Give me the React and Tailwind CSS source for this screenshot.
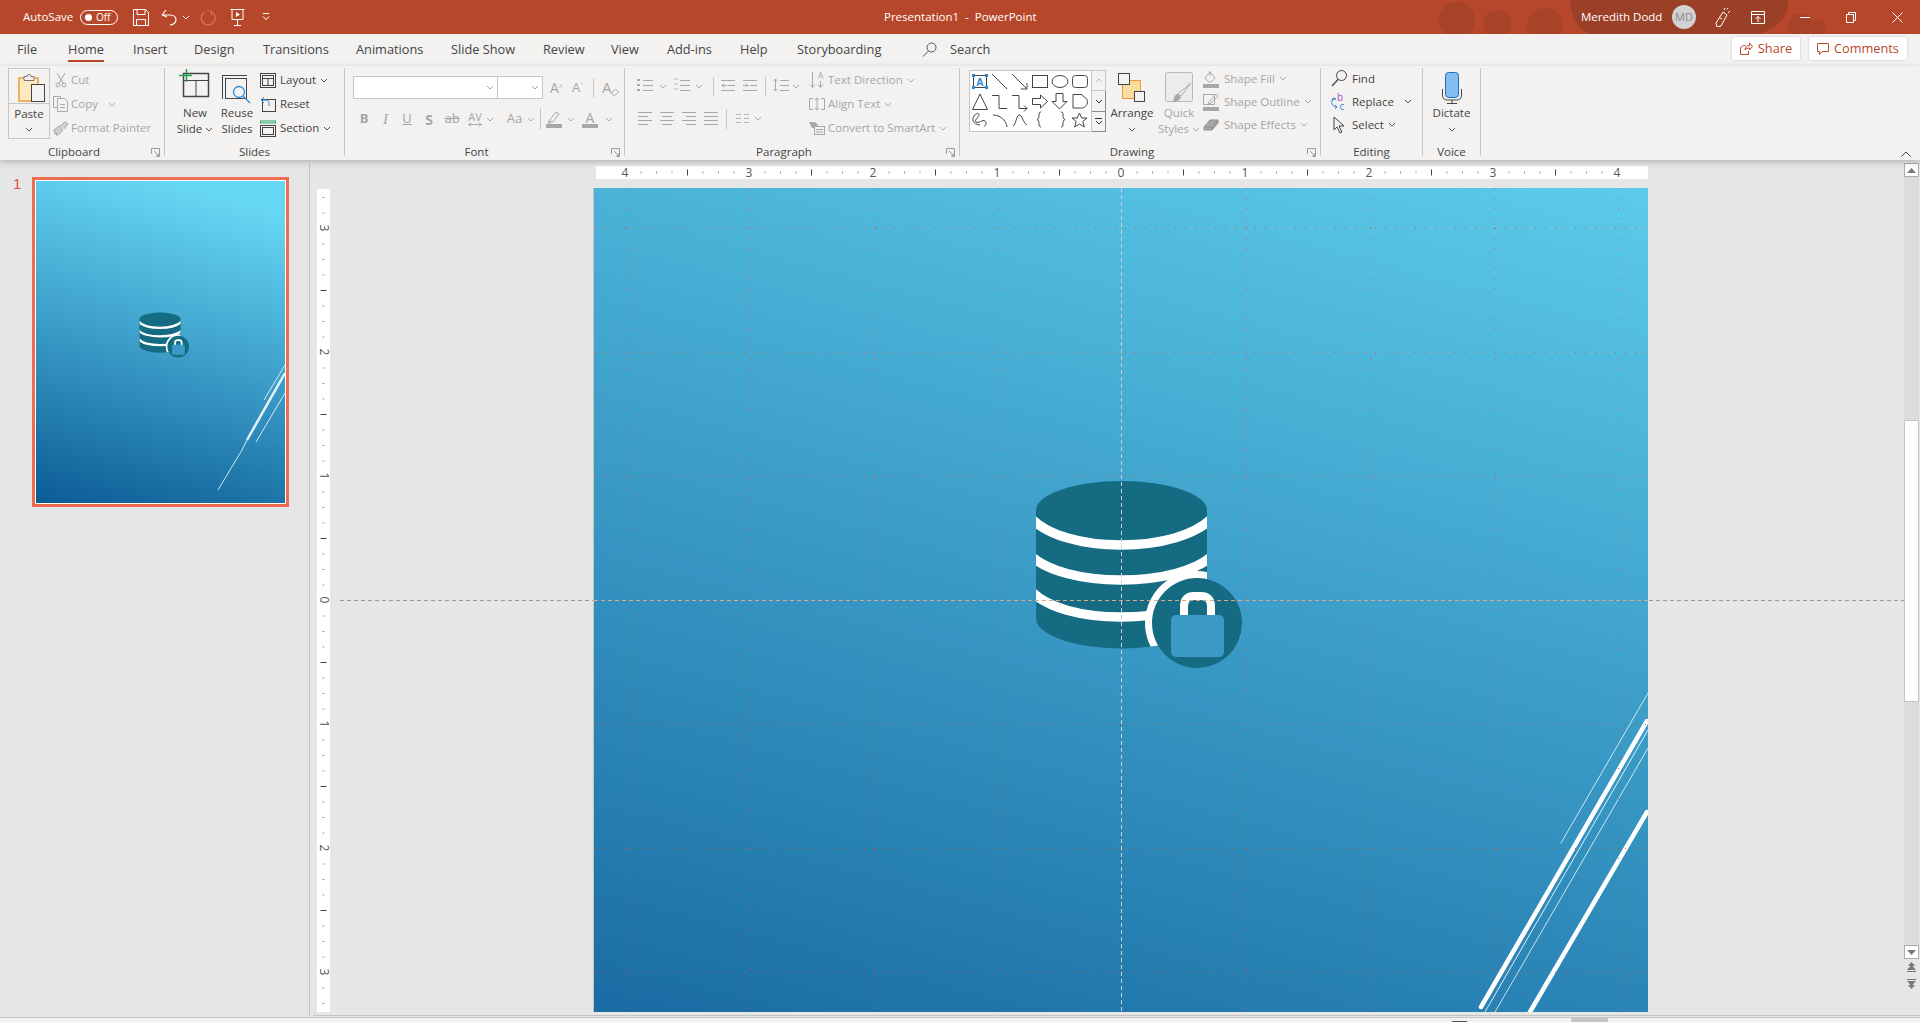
import React from 'react';

const GRAY = '#a8a8a8';
const DARK = '#444444';

const tabs = [
    { label: 'File', w: 'w-[51px]' },
    { label: 'Home', w: 'w-[65px]', active: true },
    { label: 'Insert', w: 'w-[61px]' },
    { label: 'Design', w: 'w-[69px]' },
    { label: 'Transitions', w: 'w-[93px]' },
    { label: 'Animations', w: 'w-[95px]' },
    { label: 'Slide Show', w: 'w-[92px]' },
    { label: 'Review', w: 'w-[68px]' },
    { label: 'View', w: 'w-[56px]' },
    { label: 'Add-ins', w: 'w-[73px]' },
    { label: 'Help', w: 'w-[57px]' },
    { label: 'Storyboarding', w: 'w-[125px]' },
];

const Chev = ({ color = '#555555', className = '' }) => (
    <svg width="8" height="5" viewBox="0 0 8 5" className={className}>
        <path d="M1 1l3 3 3-3" fill="none" stroke={color} strokeWidth="1" />
    </svg>
);

const Row = ({ icon, label, chev, disabled, h = 'h-[24px]', iconW = 'w-[18px]', gap = '' }) => (
    <div className={`flex items-center whitespace-nowrap ${h} ${disabled ? 'text-[#a6a6a6]' : 'text-[#444444]'}`}>
        <div className={`flex items-center shrink-0 ${iconW}`}>{icon}</div>
        <span>{label}</span>
        {chev && <Chev color={disabled ? GRAY : '#555555'} className={gap || 'ml-[4px]'} />}
    </div>
);

const Launcher = () => (
    <svg width="9" height="9" viewBox="0 0 9 9" className="absolute right-[4px] top-[4px]">
        <path d="M.5 6V.5H8.5V8.5H6M3 3l5 5M5 8h3V5" fill="none" stroke="#9a9a9a" strokeWidth="1" />
    </svg>
);

const Group = ({ label, launcher, w, children }) => (
    <div className={`flex flex-col h-[88px] border-r border-[#c8c6c4] shrink-0 ${w}`}>
        <div className="h-[76px] flex">{children}</div>
        <div className={`relative h-[12px] text-center text-[#444444] leading-[16px] ${launcher ? 'pr-[16px]' : ''}`}>
            {label}
            {launcher && <Launcher />}
        </div>
    </div>
);

const BigButton = ({ icon, lines, chev, disabled, w = 'w-[44px]' }) => (
    <div className={`flex flex-col items-center shrink-0 ${w} ${disabled ? 'text-[#a6a6a6]' : 'text-[#444444]'}`}>
        <div className="h-[37px] w-full flex justify-center">{icon}</div>
        {lines.map((l, i) => (
            <div key={l} className="h-[16px] leading-[16px] flex items-center whitespace-nowrap">
                {l}
                {chev && i === lines.length - 1 && <Chev color={disabled ? GRAY : '#555555'} className="ml-[3px]" />}
            </div>
        ))}
        {lines.length === 1 && <div className="h-[16px] flex items-center"><Chev /></div>}
    </div>
);

// bullets, numbering, indents and such for the paragraph group
const textLines = (x, y, w, n, gap, stroke = GRAY) =>
    Array.from({ length: n }).map((_, i) => (
        <path key={`${x}-${y}-${i}`} d={`M${x} ${y + i * gap + 0.5}h${w}`} stroke={stroke} />
    ));

const ParagraphTop = () => (
    <svg width="184" height="22" viewBox="624 75 184 22">
        <g fill="none">
            {textLines(642, 80, 10, 3, 5)}
            <rect x="636" y="79" width="3" height="2" fill={GRAY} />
            <rect x="636" y="84" width="3" height="2" fill={GRAY} />
            <rect x="636" y="89" width="3" height="2" fill={GRAY} />
            <path d="M659 85l3 3 3-3M695 85l3 3 3-3M792 85l3 3 3-3" stroke={GRAY} />
            {textLines(679, 80, 10, 3, 5)}
            <path d="M673 79h4M673 84h4M673 89h4" stroke={GRAY} strokeDasharray="2 1" />
            <path d="M712.5 77v19M764.5 77v19" stroke="#c8c6c4" />
            {textLines(720, 80, 14, 1, 5)}
            {textLines(720, 90, 14, 1, 5)}
            {textLines(727, 85, 7, 1, 5)}
            <path d="M726 85.5h-5m2-2l-2 2 2 2" stroke={GRAY} />
            {textLines(742, 80, 14, 1, 5)}
            {textLines(742, 90, 14, 1, 5)}
            {textLines(749, 85, 7, 1, 5)}
            <path d="M742 85.5h5m-2-2l2 2-2 2" stroke={GRAY} />
            <path d="M774.5 79v12m-2-10l2-2 2 2m-4 8l2 2 2-2" stroke={GRAY} />
            {textLines(779, 80, 9, 3, 5)}
        </g>
    </svg>
);

const ParagraphBottom = () => (
    <svg width="184" height="22" viewBox="624 108 184 22">
        <g fill="none">
            {textLines(637, 112, 14, 1, 0)}{textLines(637, 116, 10, 1, 0)}{textLines(637, 120, 14, 1, 0)}{textLines(637, 124, 10, 1, 0)}
            {textLines(659, 112, 14, 1, 0)}{textLines(661, 116, 10, 1, 0)}{textLines(659, 120, 14, 1, 0)}{textLines(661, 124, 10, 1, 0)}
            {textLines(681, 112, 14, 1, 0)}{textLines(685, 116, 10, 1, 0)}{textLines(681, 120, 14, 1, 0)}{textLines(685, 124, 10, 1, 0)}
            {textLines(703, 112, 14, 4, 4)}
            <path d="M725.5 109v20" stroke="#c8c6c4" />
            <g opacity=".8">
                {textLines(735, 114, 5, 3, 4)}
                {textLines(743, 114, 5, 3, 4)}
            </g>
            <path d="M754 117l3 3 3-3" stroke={GRAY} />
        </g>
    </svg>
);

// the shape gallery of the Drawing group
const ShapeGallery = () => (
    <svg width="121" height="60" viewBox="1 1 121 60" fill="none" stroke={DARK} strokeWidth="1">
        <rect x="4.5" y="5.5" width="13" height="12" />
        <g fill="#2b88d8" stroke="none">
            <rect x="3" y="4" width="3" height="3" /><rect x="16" y="4" width="3" height="3" />
            <rect x="3" y="16" width="3" height="3" /><rect x="16" y="16" width="3" height="3" />
        </g>
        <text x="11" y="15.5" textAnchor="middle" fontSize="10" fontWeight="700" fill="#2b88d8" stroke="none" fontFamily="Open Sans, sans-serif">A</text>
        <path d="M23 4l15 15" />
        <path d="M43 4l15 15m-6 0h6v-6" />
        <rect x="63.5" y="5.5" width="15" height="12" />
        <ellipse cx="91" cy="11.5" rx="8" ry="6" />
        <rect x="103.5" y="5.5" width="15" height="12" rx="3" />
        <path d="M11 24L3.5 39.5h15z" />
        <path d="M23 25.5h7v13h8" />
        <path d="M43 25.5h7v13h8m-3-3l3 3-3 3" />
        <path d="M63.5 28.5h8v-3.5l7 6.5-7 6.5v-3.5h-8z" />
        <path d="M87 23.5h7v8h4l-7.5 7.500-7.500-7.500h4z" />
        <path d="M104 24.500h9c1 3 5.500 3 5.500 7 0 4-3 6.500-6 6.500h-8.500z" />
        <path d="M11 55c-8-1-8-6-6-9 2-3 5-3 5-1s-5 5-3 7 7-3 9-1 1 5-1 5" />
        <path d="M24 45c7 0 13 5 14 12" />
        <path d="M44 56c3-1 3-10 6-11s4 8 8 10" />
        <path d="M72 43c-2 0-2 1-2 3s0 4-2 4.500c2 .5 2 3 2 4.500s0 3 2 3M92 43c2 0 2 1 2 3s0 4 2 4.500c-2 .5-2 3-2 4.500s0 3-2 3" transform="translate(0 -1)" />
        <path d="M110.500 43l2.200 5h5.300l-4.200 3.500 1.600 5.500-4.900-3-4.900 3 1.600-5.500-4.200-3.500h5.300z" />
    </svg>
);

const GalleryScroll = () => (
    <div className="flex flex-col w-[14px] h-[62px] shrink-0">
        <div className="h-[21px] border border-l-0 border-[#c8c6c4] flex items-center justify-center"><svg width="8" height="5"><path d="M1 4l3-3 3 3" fill="none" stroke="#bbbbbb" /></svg></div>
        <div className="h-[21px] border border-l-0 border-t-0 border-[#8a8a8a] flex items-center justify-center"><Chev color="#333333" /></div>
        <div className="h-[20px] border border-l-0 border-t-0 border-[#8a8a8a] flex flex-col items-center justify-center gap-[1px]">
            <div className="w-[7px] h-[1px] bg-[#333333]" />
            <Chev color="#333333" />
        </div>
    </div>
);

const DbLock = ({ size, id }) => (
    <svg width={size} height={size} viewBox="1030 475 220 220">
        <defs>
            <clipPath id={id}>
                <path d="M1036 510.500a85.500 29.500 0 0 1 171 0v108c0 16-38 30-85.500 30s-85.500-14-85.500-30z" />
            </clipPath>
        </defs>
        <path d="M1036 510.500a85.500 29.500 0 0 1 171 0v108c0 16-38 30-85.500 30s-85.500-14-85.500-30z" fill="#156b82" />
        <g clipPath={`url(#${id})`}>
            <g fill="none" stroke="#ffffff" strokeWidth="9.500">
                <path d="M1030 517c16 18 52 28 91 28s76-10 92-28" />
                <path d="M1030 555c16 16 52 25 91 25s76-9 92-25" />
                <path d="M1030 590c16 18 52 27 91 27s76-9 92-27" />
            </g>
            <circle cx="1197" cy="623" r="52" fill="#ffffff" />
        </g>
        <circle cx="1197" cy="623" r="45" fill="#156b82" />
        <path d="M1184 616v-10c0-7 4-10 10-10h7c6 0 10 3 10 10v10" fill="none" stroke="#ffffff" strokeWidth="8" />
        <rect x="1171" y="615" width="53" height="42" rx="5" fill="#3b9ac5" />
    </svg>
);

const rulerSteps = Array.from({ length: 65 }).map((_, i) => i - 32);

const HRuler = () => (
    <svg width="1052" height="13" viewBox="596 0 1052 13" className="block bg-white overflow-visible">
        {rulerSteps.map((k) => {
            const x = 1121 + k * 15.5;
            if (k % 8 === 0) {
                return <text key={k} x={x} y="11" textAnchor="middle" fontSize="12" fill="#555555" fontFamily="Open Sans, sans-serif">{Math.abs(k) / 8}</text>;
            }
            if (k % 4 === 0) return <rect key={k} x={x} y="3.500" width="1" height="6" fill="#444444" />;
            return <rect key={k} x={x} y="5.500" width="1" height="2" fill="#999999" />;
        })}
    </svg>
);

const VRuler = () => (
    <svg width="13" height="823" viewBox="0 189 13 823" className="block bg-white overflow-visible">
        {rulerSteps.filter((k) => Math.abs(k) <= 26).map((k) => {
            const y = 600 + k * 15.5;
            if (k % 8 === 0) {
                return <text key={k} x="0" y="0" transform={`translate(2.500 ${y}) rotate(90)`} textAnchor="middle" fontSize="12" fill="#555555" fontFamily="Open Sans, sans-serif">{Math.abs(k) / 8}</text>;
            }
            if (k % 4 === 0) return <rect key={k} x="3.500" y={y} width="6" height="1" fill="#444444" />;
            return <rect key={k} x="5.500" y={y} width="2" height="1" fill="#999999" />;
        })}
    </svg>
);

const gridX = [626, 750, 874, 998, 1246, 1370, 1494, 1618];
const gridY = [228, 352, 476, 724, 848, 972];

const Guides = () => (
    <svg width="1920" height="858" viewBox="0 160 1920 858" className="absolute left-0 top-0 pointer-events-none">
        <g stroke="#d9582c" strokeWidth="1" strokeDasharray="1 9" shapeRendering="crispEdges">
            {gridY.map((y) => <path key={y} d={`M595 ${y + 0.5}H1648`} />)}
            {gridX.map((x) => <path key={x} d={`M${x + 0.5} 188V1012`} />)}
        </g>
        <g strokeDasharray="4 3" strokeWidth="1">
            <path d="M340 600.500H593M1649 600.500H1904" stroke="#9a9a9a" />
            <path d="M594 600.500H1648" stroke="#d8a98c" />
            <path d="M1121.500 188V1012" stroke="#c6d0d6" />
        </g>
    </svg>
);

const App = () => {
    return (
        <div className="w-[1920px] h-[1022px] overflow-hidden flex flex-col bg-[#e6e6e6] text-[12.75px] font-['Open_Sans',sans-serif] text-[#444444]">
            {/* title bar */}
            <div className="relative h-[34px] bg-[#b7472a] flex items-center text-white shrink-0 overflow-hidden">
                <svg width="420" height="34" viewBox="1420 0 420 34" className="absolute left-[1420px] top-0" fill="#9c3f27">
                    <g opacity=".55">
                        <circle cx="1457" cy="20" r="18" />
                        <circle cx="1497" cy="24" r="14" />
                        <circle cx="1545" cy="26" r="18" />
                        <circle cx="1800" cy="26" r="12" />
                        <circle cx="1818" cy="28" r="8" />
                    </g>
                    <path d="M1570 0H1788c2 14-8 26-28 34H1590c-14-6-20-20-20-34z" />
                </svg>
                <div className="relative w-[884px] flex items-center pl-[23px]">
                    <span className="w-[57px] text-[11.500px]">AutoSave</span>
                    <div className="w-[38px] h-[15px] rounded-full border border-white flex items-center pl-[4px] gap-[4px] text-[10px] leading-none">
                        <div className="w-[7px] h-[7px] rounded-full bg-white" />
                        <span>Off</span>
                    </div>
                    <svg width="16" height="17" viewBox="0 0 16 17" fill="none" stroke="#fff" className="ml-[15px]">
                        <path d="M.5.500h12l3 3v13H.500zM4 .5v5h8v-5M3.500 16.500v-6h9v6" />
                    </svg>
                    <svg width="16" height="17" viewBox="0 0 16 17" fill="none" stroke="#fff" strokeWidth="1.200" className="ml-[12px]">
                        <path d="M1 6h8c4 0 6 2.500 6 5s-3 5-6 5M1 6l4-5M1 6l5 2" />
                    </svg>
                    <Chev color="#ffffff" className="ml-[5px]" />
                    <svg width="16" height="17" viewBox="0 0 16 17" fill="none" stroke="#d9735a" strokeWidth="1.200" className="ml-[10px]">
                        <path d="M11 2.500A7 7 0 1 1 4.500 3M11 2l.5 4.500M11 2L7 1" />
                    </svg>
                    <svg width="15" height="17" viewBox="0 0 15 17" fill="none" stroke="#fff" className="ml-[14px]">
                        <path d="M.5.500h14M2 .5v10h11V.5M7.500 10.500v6M4 16.500h7" />
                        <path d="M6 3l4 2.500L6 8z" fill="#fff" stroke="none" />
                    </svg>
                    <svg width="8" height="8" viewBox="0 0 8 8" fill="none" stroke="#fff" className="ml-[17px]">
                        <path d="M1 .5h6M1 3.500l3 3 3-3" />
                    </svg>
                </div>
                <div className="relative w-[697px] text-[11.500px] whitespace-pre">Presentation1  -  PowerPoint</div>
                <div className="relative flex items-center">
                    <span className="w-[91px] text-[11.500px]">Meredith Dodd</span>
                    <div className="w-[24px] h-[24px] rounded-full bg-[#d2d2d2] text-[#8a8a8a] text-[11px] flex items-center justify-center">MD</div>
                    <svg width="18" height="20" viewBox="0 0 18 20" fill="none" stroke="#fff" className="ml-[18px]">
                        <path d="M2 16l7-11 4 3-6 11-4 1zM10 3l1-2M14 6l2-2M13 2.500l1-1.500M8 12l-2-1" />
                    </svg>
                    <svg width="14" height="13" viewBox="0 0 14 13" fill="none" stroke="#fff" className="ml-[19px]">
                        <path d="M.5.500h13v12H.500zM.5 3.500h13M7 11V5.500M4.500 8L7 5.500 9.500 8" />
                    </svg>
                    <div className="w-[10px] h-[1px] bg-white ml-[35px]" />
                    <svg width="10" height="11" viewBox="0 0 10 11" fill="none" stroke="#fff" className="ml-[36px]">
                        <path d="M.5 2.500h7v8h-7zM2.500 2.500v-2h7v8h-2" />
                    </svg>
                    <svg width="11" height="11" viewBox="0 0 11 11" stroke="#fff" className="ml-[36px]">
                        <path d="M.5.500l10 10M10.500.500l-10 10" />
                    </svg>
                </div>
            </div>

            {/* tabs */}
            <div className="h-[32px] bg-[#f3f2f1] flex pl-[17px] shrink-0 text-[#444444]">
                {tabs.map((t) => (
                    <div key={t.label} className={`${t.w} shrink-0 h-full pt-[6px] leading-[18px]`}>
                        <span className={`inline-block h-[22px] ${t.active ? 'border-b-[2px] border-[#b7472a] font-medium' : ''}`}>{t.label}</span>
                    </div>
                ))}
                <div className="flex items-start pt-[8px]">
                    <svg width="15" height="15" viewBox="0 0 15 15" fill="none" stroke="#555555">
                        <circle cx="9.500" cy="5.500" r="4.500" />
                        <path d="M6.500 9L1 14.500" />
                    </svg>
                    <span className="ml-[13px] -mt-[2px] leading-[18px]">Search</span>
                </div>
                <div className="ml-auto pr-[13px] pt-[3px] flex gap-[9px] text-[#b7472a]">
                    <div className="w-[68px] h-[23px] bg-white rounded-[2px] shadow-[0_0_2px_rgba(0,0,0,.25)] flex items-center justify-center gap-[5px]">
                        <svg width="13" height="13" viewBox="0 0 13 13" fill="none" stroke="#b7472a">
                            <path d="M.5 5.500v7h8V9M.5 5.500l3-2h2M5 8c0-3 2-4.500 4.500-4.500V1l3 3.500L9.500 8V6C7.500 6 6 6.500 5 8z" />
                        </svg>
                        <span>Share</span>
                    </div>
                    <div className="w-[98px] h-[23px] bg-white rounded-[2px] shadow-[0_0_2px_rgba(0,0,0,.25)] flex items-center justify-center gap-[5px]">
                        <svg width="12" height="12" viewBox="0 0 12 12" fill="none" stroke="#b7472a">
                            <path d="M.5.500h11v8H5l-2.500 3v-3h-2z" />
                        </svg>
                        <span>Comments</span>
                    </div>
                </div>
            </div>

            {/* ribbon */}
            <div className="relative z-10 h-[94px] bg-[#f3f2f1] shadow-[0_2px_6px_rgba(0,0,0,.22)] flex pt-[2px] shrink-0 text-[11.500px]">
                <Group label="Clipboard" launcher w="w-[165px]">
                    <div className="ml-[8px] w-[42px] h-[71px] border border-[#c8c6c4] flex flex-col shrink-0">
                        <div className="h-[35px] border-b border-[#c8c6c4] pl-[9px] pt-[3px]">
                            <svg width="28" height="31" viewBox="0 0 28 31">
                                <rect x="1" y="6" width="19" height="23" fill="#fde9c0" stroke="#ed9c3c" strokeWidth="1.500" />
                                <path d="M6 4.500h3a2 2 0 0 1 4 0h3v4H6z" fill="#f3f2f1" stroke="#777777" />
                                <rect x="13.500" y="12.500" width="13" height="17" fill="#f3f3f3" stroke="#444444" />
                            </svg>
                        </div>
                        <div className="flex-1 flex flex-col items-center pt-[1px]">
                            <span className="h-[18px] leading-[18px]">Paste</span>
                            <Chev className="mt-[4px]" />
                        </div>
                    </div>
                    <div className="ml-[3px] flex flex-col">
                        <Row disabled label="Cut" icon={
                            <svg width="12" height="16" viewBox="0 0 12 16" fill="none" stroke={GRAY} className="ml-[2px]">
                                <path d="M2 1l6 10M10 1L4 11" /><circle cx="3" cy="13" r="2" /><circle cx="9" cy="13" r="2" />
                            </svg>
                        } />
                        <Row disabled label="Copy" chev gap="ml-[10px]" icon={
                            <svg width="16" height="16" viewBox="0 0 16 16" fill="none" stroke={GRAY}>
                                <path d="M.5.500h7v2M4.500 2.500h7l3 3v10h-10zM.5.500v11h4M7 8.500h5M7 11.500h5" />
                            </svg>
                        } />
                        <Row disabled label="Format Painter" icon={
                            <svg width="16" height="15" viewBox="0 0 16 15" fill="none" stroke={GRAY}>
                                <path d="M1 9l5-4 4 4-5 5H3l1-2-2 1zM7 5l5-4 3 2-4 5" fill="#d0d0d0" />
                            </svg>
                        } />
                    </div>
                </Group>

                <Group label="Slides" w="w-[180px]">
                    <div className="ml-[8px]">
                        <BigButton w="w-[44px]" lines={['New', 'Slide']} chev icon={
                            <svg width="32" height="37" viewBox="0 0 32 37" fill="none">
                                <rect x="4.500" y="5.500" width="25" height="23" stroke="#444444" strokeWidth="1.500" />
                                <path d="M4.500 12.500h25M17 12.500v16" stroke="#444444" />
                                <path d="M0 7.500h13M7.500 1v13" stroke="#22a55b" strokeWidth="1.500" />
                            </svg>
                        } />
                    </div>
                    <div className="-ml-[1px]">
                        <BigButton w="w-[42px]" lines={['Reuse', 'Slides']} icon={
                            <svg width="32" height="37" viewBox="0 0 32 37" fill="none">
                                <path d="M1 7.500h25M1.500 7v24" stroke="#444444" />
                                <rect x="4.500" y="10.500" width="21" height="20" stroke="#444444" />
                                <circle cx="18" cy="24" r="5.500" stroke="#2b88d8" strokeWidth="1.300" fill="#f3f2f1" />
                                <path d="M22 28l7 7" stroke="#2b88d8" strokeWidth="1.300" />
                            </svg>
                        } />
                    </div>
                    <div className="ml-[2px] flex flex-col">
                        <Row label="Layout" chev iconW="w-[20px]" icon={
                            <svg width="16" height="15" viewBox="0 0 16 15" fill="none" stroke="#444444">
                                <rect x=".5" y=".5" width="15" height="14" /><rect x="2.500" y="2.500" width="11" height="10" /><path d="M2.500 5.500h11M8 5.500v7" />
                            </svg>
                        } />
                        <Row label="Reset" iconW="w-[20px]" icon={
                            <svg width="16" height="16" viewBox="0 0 16 16" fill="none">
                                <rect x="2.500" y="3.500" width="13" height="12" stroke="#444444" />
                                <path d="M4 1L1 4l3 3M1 4h5c2 0 3 2 3 3.500V10" stroke="#2b88d8" />
                            </svg>
                        } />
                        <Row label="Section" chev iconW="w-[20px]" icon={
                            <svg width="16" height="17" viewBox="0 0 16 17" fill="none">
                                <rect x=".5" y="1" width="15" height="2" stroke="#22a55b" />
                                <rect x=".5" y="5.500" width="15" height="11" stroke="#444444" /><rect x="2.500" y="7.500" width="11" height="7" stroke="#444444" />
                            </svg>
                        } />
                    </div>
                </Group>

                <Group label="Font" launcher w="w-[280px]">
                    <div className="pl-[8px] pt-[8px] flex flex-col text-[#a6a6a6] text-[13px]">
                        <div className="flex items-center h-[23px]">
                            <div className="w-[145px] h-[23px] bg-white border border-[#c8c6c4] flex items-center justify-end pr-[3px]"><Chev color={GRAY} /></div>
                            <div className="w-[45px] h-[23px] bg-white border border-l-0 border-[#c8c6c4] flex items-center justify-end pr-[3px]"><Chev color={GRAY} /></div>
                            <span className="ml-[7px] w-[22px] text-[14px]">A<sup className="text-[7px]">^</sup></span>
                            <span className="w-[20px] text-[13px]">A<sup className="text-[7px]">ˇ</sup></span>
                            <div className="w-px h-[20px] bg-[#c8c6c4] ml-[1px]" />
                            <span className="ml-[8px] relative text-[15px] flex items-center">
                                A
                                <svg width="8" height="8" viewBox="0 0 8 8" className="absolute -right-[7px] bottom-[3px]" fill="none" stroke={GRAY}><path d="M.5 5l4-4 3 3-4 3.500h-1z" /></svg>
                            </span>
                        </div>
                        <div className="flex items-center h-[24px] mt-[8px] text-center">
                            <span className="w-[22px] font-bold">B</span>
                            <span className="w-[21px] italic font-['Liberation_Serif',serif] text-[15px]">I</span>
                            <span className="w-[22px] underline">U</span>
                            <span className="w-[22px] font-bold text-[14px]">S</span>
                            <span className="w-[24px] line-through">ab</span>
                            <div className="w-[22px] flex flex-col items-center leading-[10px] text-[11px]">
                                <span>AV</span>
                                <svg width="14" height="5" viewBox="0 0 14 5" fill="none" stroke={GRAY}><path d="M0 2.500h14M3 .5l-2 2 2 2M11 .5l2 2-2 2" /></svg>
                            </div>
                            <Chev color={GRAY} />
                            <span className="ml-[8px] w-[25px] text-[13px]">Aa</span>
                            <Chev color={GRAY} />
                            <div className="w-px h-[22px] bg-[#c8c6c4] ml-[5px]" />
                            <svg width="16" height="18" viewBox="0 0 16 18" fill="none" className="ml-[5px]">
                                <path d="M3 11L10 2l3 2-6 8zM3 11l-1 2h3" stroke={GRAY} />
                                <rect y="14" width="16" height="4" fill={GRAY} />
                            </svg>
                            <Chev color={GRAY} className="ml-[5px]" />
                            <div className="ml-[7px] w-[16px] flex flex-col items-center leading-[13px] text-[14px]">
                                <span>A</span>
                                <div className="w-[16px] h-[4px] bg-[#a8a8a8]" />
                            </div>
                            <Chev color={GRAY} className="ml-[7px]" />
                        </div>
                    </div>
                </Group>

                <Group label="Paragraph" launcher w="w-[335px]">
                    <div className="pt-[7px] flex flex-col gap-[11px] shrink-0 w-[184px]">
                        <ParagraphTop />
                        <ParagraphBottom />
                    </div>
                    <div className="flex flex-col">
                        <Row disabled label="Text Direction" chev iconW="w-[19px]" icon={
                            <svg width="15" height="20" viewBox="0 0 15 20" fill="none" stroke={GRAY} className="overflow-visible">
                                <path d="M3.500 2v15M1 14.500l2.500 3 2.500-3M11.500 11v6M9 14.500l2.500 3 2.500-3" />
                                <text x="11.500" y="9" textAnchor="middle" fontSize="9" fill={GRAY} stroke="none">A</text>
                            </svg>
                        } />
                        <Row disabled label="Align Text" chev iconW="w-[19px]" icon={
                            <svg width="16" height="14" viewBox="0 0 16 14" fill="none" stroke={GRAY}>
                                <path d="M4 1.500H.5v11H4M12 1.500h3.500v11H12M8 1v12M6 3l2-2 2 2M6 11l2 2 2-2" />
                            </svg>
                        } />
                        <Row disabled label="Convert to SmartArt" chev iconW="w-[19px]" icon={
                            <svg width="16" height="14" viewBox="0 0 16 14" fill="none" stroke={GRAY}>
                                <path d="M0 1h6l3 3-3 3H3z" fill={GRAY} stroke="none" />
                                <rect x="5.500" y="5.500" width="10" height="8" fill="#f3f2f1" /><path d="M7 8.500h7M7 11h7" />
                            </svg>
                        } />
                    </div>
                </Group>

                <Group label="Drawing" launcher w="w-[361px]">
                    <div className="ml-[9px] mt-[2px] flex h-[62px] shrink-0">
                        <div className="w-[123px] bg-white border border-[#c8c6c4]"><ShapeGallery /></div>
                        <GalleryScroll />
                    </div>
                    <div className="ml-[4px]">
                        <BigButton lines={['Arrange']} icon={
                            <svg width="30" height="37" viewBox="0 0 30 37" fill="none" className="mt-[3px]">
                                <rect x="5.500" y="9.500" width="18" height="18" fill="#fbdc9f" stroke="#ed9c3c" />
                                <rect x="1.500" y="2.500" width="11" height="11" fill="#f3f2f1" stroke="#444444" />
                                <rect x="17.500" y="20.500" width="10" height="10" fill="#f3f2f1" stroke="#444444" />
                            </svg>
                        } />
                    </div>
                    <div className="ml-[3px]">
                        <BigButton disabled chev lines={['Quick', 'Styles']} icon={
                            <svg width="30" height="37" viewBox="0 0 30 37" fill="none" className="mt-[3px]">
                                <rect x="1.500" y="1.500" width="27" height="29" rx="2" fill="#ececec" stroke="#b8b8b8" />
                                <path d="M27 12L17 25l-3-2z" fill="#f3f2f1" stroke={GRAY} />
                                <path d="M14 23c-3 0-4 3-5 8 4 0 7-2 8-5z" fill={GRAY} />
                            </svg>
                        } />
                    </div>
                    <div className="ml-[2px] -mt-[1px] flex flex-col">
                        <Row disabled h="h-[23px]" iconW="w-[21px]" label="Shape Fill" chev icon={
                            <svg width="16" height="18" viewBox="0 0 16 18" fill="none" stroke={GRAY}>
                                <path d="M2 8l5-6 5 6-4 4H6zM7 1v5" /><rect y="14" width="16" height="4" fill={GRAY} stroke="none" />
                            </svg>
                        } />
                        <Row disabled h="h-[23px]" iconW="w-[21px]" label="Shape Outline" chev icon={
                            <svg width="16" height="18" viewBox="0 0 16 18" fill="none" stroke={GRAY}>
                                <path d="M.5 1.500h11v10H.500zM5 10l8-9 2 2-8 8z" /><rect y="14" width="16" height="4" fill={GRAY} stroke="none" />
                            </svg>
                        } />
                        <Row disabled h="h-[23px]" iconW="w-[21px]" label="Shape Effects" chev icon={
                            <svg width="16" height="14" viewBox="0 0 16 14" fill="none" stroke="#8f8f8f">
                                <path d="M1 9l6-7h8v3l-6 7H1z" fill={GRAY} /><path d="M1 9h8v3M9 9l6-7" />
                            </svg>
                        } />
                    </div>
                </Group>

                <Group label="Editing" w="w-[102px]">
                    <div className="pl-[10px] -mt-[1px] flex flex-col">
                        <Row h="h-[23px]" iconW="w-[21px]" label="Find" icon={
                            <svg width="16" height="17" viewBox="0 0 16 17" fill="none" stroke="#444444">
                                <circle cx="10.500" cy="5.500" r="5" /><path d="M7 9.500L1 16" strokeWidth="1.300" />
                            </svg>
                        } />
                        <div className="flex items-center">
                            <Row h="h-[23px]" iconW="w-[21px]" label="Replace" icon={
                                <svg width="15" height="18" viewBox="0 0 15 18" fill="none" className="overflow-visible">
                                    <text x="9" y="8" fontSize="10" fill="#b146c2" textAnchor="middle">b</text>
                                    <text x="11" y="17" fontSize="10" fill="#2b88d8" textAnchor="middle">c</text>
                                    <path d="M5 6c-4 0-5 3-4 5s3 3 5 3M1 8l1-3 3 1M6 14l-2-2M6 14l-2 2" stroke="#2b88d8" />
                                </svg>
                            } />
                            <Chev className="ml-[10px]" />
                        </div>
                        <Row h="h-[23px]" iconW="w-[21px]" label="Select" chev icon={
                            <svg width="13" height="18" viewBox="0 0 13 18" fill="#f3f2f1" stroke="#444444" className="ml-[2px]">
                                <path d="M1 1v13l3-3 3 6 2-1-3-6h5z" />
                            </svg>
                        } />
                    </div>
                </Group>

                <Group label="Voice" w="w-[58px]">
                    <div className="w-full">
                        <BigButton w="w-full" lines={['Dictate']} icon={
                            <svg width="20" height="32" viewBox="0 0 20 32" fill="none" className="mt-[4px]">
                                <rect x="3.500" y="0.500" width="13" height="25" rx="3" fill="#83bcee" stroke="#1e6fbd" />
                                <path d="M.5 17v7c0 3 3 4 5 4h9c2 0 5-1 5-4v-7M10 28v3M5 31.500h10" stroke="#444444" />
                            </svg>
                        } />
                    </div>
                </Group>

                <svg width="10" height="6" viewBox="0 0 10 6" fill="none" stroke="#444444" className="ml-auto mr-[9px] mt-[83px]">
                    <path d="M.5 5.500L5 1l4.500 4.500" />
                </svg>
            </div>

            {/* workspace */}
            <div className="relative h-[858px] shrink-0 flex border-b border-[#c4c4c4] overflow-hidden">
                <div className="w-[310px] h-[853px] mt-[3px] border-r border-[#c4c4c4] shrink-0 flex pt-[14px]">
                    <span className="w-[32px] pl-[13px] -mt-[3px] text-[#d9553a] text-[15px] leading-[20px] shrink-0 font-['Liberation_Sans',sans-serif]">1</span>
                    <div className="w-[257px] h-[330px] border-[3px] border-[#ee6d50] shrink-0">
                        <div className="relative w-full h-full border border-white overflow-hidden bg-[linear-gradient(195deg,#67d8f4_8%,#3c9ec9_52%,#0b5c95_100%)]">
                            <div className="absolute left-[102px] top-[130px]"><DbLock size={53} id="thumb-db" /></div>
                            <svg width="249" height="322" viewBox="36 181 249 322" className="absolute left-0 top-0" fill="none" stroke="#ffffff">
                                <path d="M285 365l-21 35" opacity=".8" />
                                <path d="M285 373l-38 67" strokeWidth="2.500" opacity=".85" />
                                <path d="M247 440l-5 10-24 40" opacity=".8" />
                                <path d="M285 393l-29 49" opacity=".8" />
                            </svg>
                        </div>
                    </div>
                </div>

                <div className="ml-[7px] mt-[29px] shrink-0"><VRuler /></div>

                <div className="ml-[263px] flex flex-col shrink-0 w-[1055px]">
                    <div className="ml-[3px] mt-[6px] shrink-0"><HRuler /></div>
                    <div className="relative mt-[9px] w-[1055px] h-[824px] border-l border-[#c4c4c4] overflow-hidden shrink-0 bg-[linear-gradient(195deg,#5ccbea_0%,#196ca3_100%)]">
                        <div className="absolute left-[436px] top-[287px]"><DbLock size={220} id="main-db" /></div>
                        <svg width="1054" height="824" viewBox="594 188 1054 824" className="absolute left-0 top-0" fill="none" stroke="#ffffff" strokeLinecap="round">
                            <path d="M1648 693l-87 150" strokeWidth="1" opacity=".75" />
                            <path d="M1647 721l-166 286" strokeWidth="4.500" />
                            <path d="M1648 730l-163 282" strokeWidth="1" opacity=".85" />
                            <path d="M1648 748l-153 264" strokeWidth="1" opacity=".75" />
                            <path d="M1647 812l-117 200" strokeWidth="4.500" />
                        </svg>
                    </div>
                </div>

                <div className="ml-auto w-[15px] mr-[1px] mt-[3px] flex flex-col items-stretch shrink-0">
                    <div className="h-[14px] bg-white border border-[#ababab] flex items-center justify-center">
                        <svg width="9" height="5"><path d="M0 5l4.500-5L9 5z" fill="#777777" /></svg>
                    </div>
                    <div className="h-[768px] bg-[#dcdcdc] pt-[243px]">
                        <div className="h-[282px] bg-white border border-[#c4c4c4]" />
                    </div>
                    <div className="h-[14px] bg-white border border-[#ababab] flex items-center justify-center">
                        <svg width="9" height="5"><path d="M0 0l4.500 5L9 0z" fill="#777777" /></svg>
                    </div>
                    <div className="mt-[3px] flex flex-col items-center gap-[7px]">
                        <svg width="9" height="10" viewBox="0 0 9 10" fill="#777777"><path d="M4.500 0L8 4H1zM4.500 3L9 8H0zM0 9h9v1H0z" /></svg>
                        <svg width="9" height="10" viewBox="0 0 9 10" fill="#777777"><path d="M0 0h9v1H0zM0 2h9L4.500 7zM1 6h7l-3.500 4z" /></svg>
                    </div>
                </div>

                <div className="absolute left-[313px] right-0 top-[855px] h-px bg-[#c4c4c4]" />
                <Guides />
            </div>

            {/* status bar, only a sliver of it shows */}
            <div className="h-[4px] bg-[#f3f2f1] shrink-0 flex items-end pl-[1452px]">
                <div className="w-[15px] h-[1px] bg-[#555555]" />
                <div className="ml-[104px] w-[37px] h-[4px] bg-[#c8c6c4]" />
            </div>
        </div>
    );
};

export default App;
